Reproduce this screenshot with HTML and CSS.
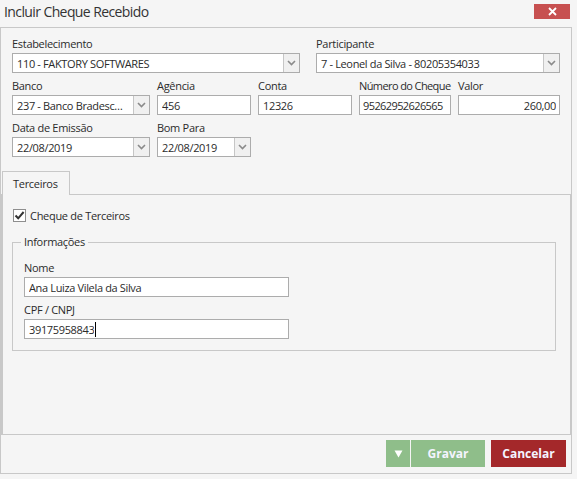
FILE: index.html
```html
<!DOCTYPE html>
<html lang="pt-BR">
<head>
<meta charset="utf-8">
<title>Incluir Cheque Recebido</title>
<link rel="stylesheet" href="styles.css">
</head>
<body>
<div class="window">
  <div class="titlebar">
    <span class="title">Incluir Cheque Recebido</span>
    <button class="close" type="button" aria-label="Fechar">
      <svg width="9" height="9" viewBox="0 0 9 9"><path d="M1 1L8 8M8 1L1 8" stroke="#fff" stroke-width="1.8"/></svg>
    </button>
  </div>
  <div class="dialog">
    <div class="form">
      <div class="row">
        <div class="field w-estab">
          <label>Estabelecimento</label>
          <div class="input combo"><span class="val">110 - FAKTORY SOFTWARES</span><span class="drop"><svg width="9" height="6" viewBox="0 0 9 6"><path d="M1 1L4.5 4.5L8 1" fill="none" stroke="#8a8a8a" stroke-width="1.6"/></svg></span></div>
        </div>
        <div class="field w-part">
          <label>Participante</label>
          <div class="input combo"><span class="val">7 - Leonel da Silva - 80205354033</span><span class="drop"><svg width="9" height="6" viewBox="0 0 9 6"><path d="M1 1L4.5 4.5L8 1" fill="none" stroke="#8a8a8a" stroke-width="1.6"/></svg></span></div>
        </div>
      </div>
      <div class="row gap7">
        <div class="field w-banco">
          <label>Banco</label>
          <div class="input combo"><span class="val">237 - Banco Bradesc…</span><span class="drop"><svg width="9" height="6" viewBox="0 0 9 6"><path d="M1 1L4.5 4.5L8 1" fill="none" stroke="#8a8a8a" stroke-width="1.6"/></svg></span></div>
        </div>
        <div class="field w-ag">
          <label>Agência</label>
          <div class="input"><span class="val">456</span></div>
        </div>
        <div class="field w-conta">
          <label>Conta</label>
          <div class="input"><span class="val">12326</span></div>
        </div>
        <div class="field w-num tight">
          <label>Número do Cheque</label>
          <div class="input"><span class="val">95262952626565</span></div>
        </div>
        <div class="field w-valor">
          <label>Valor</label>
          <div class="input right"><span class="val">260,00</span></div>
        </div>
      </div>
      <div class="row gap7">
        <div class="field w-banco">
          <label>Data de Emissão</label>
          <div class="input combo"><span class="val">22/08/2019</span><span class="drop"><svg width="9" height="6" viewBox="0 0 9 6"><path d="M1 1L4.5 4.5L8 1" fill="none" stroke="#8a8a8a" stroke-width="1.6"/></svg></span></div>
        </div>
        <div class="field w-ag">
          <label>Bom Para</label>
          <div class="input combo"><span class="val">22/08/2019</span><span class="drop"><svg width="9" height="6" viewBox="0 0 9 6"><path d="M1 1L4.5 4.5L8 1" fill="none" stroke="#8a8a8a" stroke-width="1.6"/></svg></span></div>
        </div>
      </div>
    </div>

    <div class="tabs">
      <div class="tabstrip"><span class="tab">Terceiros</span></div>
      <div class="tabpanel">
        <div class="check">
          <span class="box"><svg width="11" height="11" viewBox="0 0 11 11"><path d="M1.5 5.5L4.2 8.3L9.6 2" fill="none" stroke="#333" stroke-width="2"/></svg></span>
          <span>Cheque de Terceiros</span>
        </div>
        <div class="group">
          <div class="legend">Informações</div>
          <div class="field w-nome first">
            <label>Nome</label>
            <div class="input"><span class="val">Ana Luiza Vilela da Silva</span></div>
          </div>
          <div class="field w-nome">
            <label>CPF / CNPJ</label>
            <div class="input"><span class="val fixed">39175958843</span><span class="caret"></span></div>
          </div>
        </div>
      </div>
    </div>

    <div class="footer">
      <div class="split">
        <button class="btn arrow" type="button"><svg width="9" height="9" viewBox="0 0 9 9"><path d="M0.5 1.5H8.5L4.5 8.5Z" fill="#fff"/></svg></button>
        <button class="btn gravar" type="button">Gravar</button>
      </div>
      <button class="btn cancelar" type="button">Cancelar</button>
    </div>
  </div>
</div>
</body>
</html>
```

FILE: styles.css
```css
* { box-sizing: border-box; }
html, body { margin: 0; padding: 0; }
body {
  background: #f5f5f5;
  font-family: "Open Sans", "Noto Sans", Arial, sans-serif;
  font-size: 11px;
  color: #2b2b2b;
  width: 577px;
  height: 479px;
  overflow: hidden;
}
.window { width: 577px; height: 479px; }

.titlebar {
  height: 27px;
  display: flex;
  align-items: flex-start;
  justify-content: space-between;
  padding: 3px 7px 0 4px;
}
.title {
  font-size: 14px;
  color: #333;
  line-height: 18px;
  letter-spacing: -0.6px;
}
.close {
  width: 36px;
  height: 15px;
  border: 0;
  padding: 0;
  margin: 1px 0 0 0;
  background: #c75050;
  display: flex;
  align-items: center;
  justify-content: center;
}

.dialog {
  width: 572px;
  height: 447px;
  border: 1px solid #c8c8c8;
  display: flex;
  flex-direction: column;
}

.form {
  padding: 10px 0 0 11px;
  height: 143px;
  display: flex;
  flex-direction: column;
  gap: 7px;
}
.row { display: flex; gap: 16px; }
.row.gap7 { gap: 7px; }
.field { display: flex; flex-direction: column; }
.field label {
  height: 15px;
  line-height: 12px;
  letter-spacing: -0.3px;
  white-space: nowrap;
}
.w-estab { width: 288px; }
.w-part { width: 244px; }
.w-banco { width: 138px; }
.w-ag { width: 94px; }
.w-conta { width: 94px; }
.w-num { width: 92px; }
.w-valor { width: 102px; }
.w-nome { width: 265px; }

.input {
  height: 20px;
  background: #fff;
  border: 1px solid #acacac;
  display: flex;
  align-items: center;
  padding-left: 4px;
  white-space: nowrap;
  overflow: hidden;
  letter-spacing: -0.35px;
}
.tight label { letter-spacing: -0.6px; }
.tight .input { letter-spacing: -0.6px; padding-left: 3px; }
.input.right { justify-content: flex-end; padding-right: 3px; }
.input .val { flex: 1 1 auto; overflow: hidden; }
.input .val.fixed { flex: 0 0 auto; }
.input.right .val { flex: 0 0 auto; }
.combo { padding-right: 0; }
.drop {
  flex: 0 0 16px;
  height: 18px;
  border-left: 1px solid #c6c6c6;
  background: #f0f0f0;
  display: flex;
  align-items: center;
  justify-content: center;
}
.caret {
  width: 1px;
  height: 15px;
  background: #000;
  flex: 0 0 1px;
  margin-left: 1px;
}

.tabs { display: flex; flex-direction: column; height: 264px; }
.tabstrip { height: 23px; display: flex; align-items: flex-end; padding-left: 1px; }
.tab {
  width: 68px;
  height: 24px;
  border: 1px solid #c8c8c8;
  border-bottom: 0;
  background: #f5f5f5;
  padding: 4px 0 0 10px;
  margin-bottom: -1px;
  position: relative;
  z-index: 1;
  letter-spacing: -0.3px;
}
.tabpanel {
  flex: 1;
  border-top: 1px solid #c8c8c8;
  border-left: 2px solid #c8c8c8;
  border-right: 2px solid #c8c8c8;
  border-bottom: 1px solid #c8c8c8;
  margin-right: -1px;
  padding: 13px 0 0 9px;
}
.check { display: flex; align-items: center; gap: 4px; height: 15px; margin-left: 1px; letter-spacing: -0.3px; }
.box {
  width: 13px;
  height: 13px;
  border: 1px solid #8e8e8e;
  background: #fff;
  display: flex;
  align-items: center;
  justify-content: center;
}
.group {
  margin-top: 19px;
  width: 544px;
  height: 109px;
  border: 1px solid #c8c8c8;
  padding: 0 0 0 11px;
  display: flex;
  flex-direction: column;
  gap: 7px;
}
.legend {
  align-self: flex-start;
  margin: -8px 0 0 -3px;
  padding: 0 3px;
  height: 14px;
  line-height: 14px;
  background: #f5f5f5;
  font-size: 11px;
  letter-spacing: -0.3px;
}
.group .field.first { margin-top: 6px; }

.footer {
  flex: 1;
  display: flex;
  justify-content: flex-end;
  align-items: flex-start;
  padding: 5px 5px 0 0;
  gap: 6px;
}
.split { display: flex; gap: 1px; }
.btn {
  height: 27px;
  border: 0;
  margin: 0;
  padding: 0;
  font-family: "Open Sans", "Noto Sans", Arial, sans-serif;
  font-weight: bold;
  font-size: 12px;
  color: #f4f4ff;
  display: flex;
  align-items: center;
  justify-content: center;
}
.arrow { width: 24px; background: #8fbe8a; }
.gravar { width: 74px; background: #8fbe8a; }
.cancelar { width: 75px; background: #a4282a; }
```
